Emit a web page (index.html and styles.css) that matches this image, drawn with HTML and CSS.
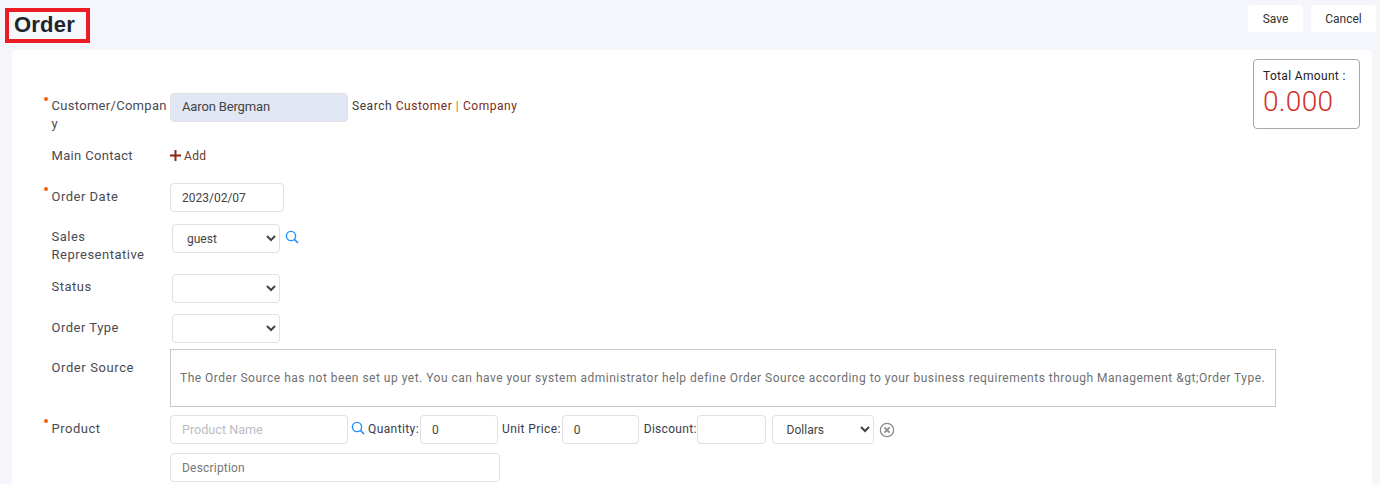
FILE: index.html
```html
<!DOCTYPE html>
<html lang="en">
<head>
<meta charset="utf-8">
<title>Order</title>
<link rel="stylesheet" href="styles.css">
</head>
<body>
<header class="top">
  <h1 class="title">Order</h1>
  <div class="actions">
    <button class="btn btn-save">Save</button>
    <button class="btn">Cancel</button>
  </div>
</header>
<main class="card">
  <div class="total">
    <div class="total-label">Total Amount :</div>
    <div class="total-value">0.000</div>
  </div>
  <div class="row row-customer">
    <label class="label req">Customer/Company</label>
    <input class="input input-customer" value="Aaron Bergman">
    <span class="search-text">Search <a class="link">Customer</a> <span class="sep">|</span> <a class="link">Company</a></span>
  </div>
  <div class="row row-contact">
    <label class="label">Main Contact</label>
    <a class="add"><svg class="plus" width="11" height="11" viewBox="0 0 11 11"><path d="M5.5 0v11M0 5.5h11" stroke="#8a2a12" stroke-width="2"/></svg>Add</a>
  </div>
  <div class="row row-date">
    <label class="label req">Order Date</label>
    <input class="input input-date" value="2023/02/07">
  </div>
  <div class="row row-sales">
    <label class="label">Sales Representative</label>
    <select class="select"><option>guest</option></select>
    <svg class="search-icon search-sales" width="14" height="14" viewBox="0 0 14 14"><circle cx="6" cy="6" r="4.6" fill="none" stroke="#1e90ff" stroke-width="1.4"/><path d="M9.4 9.4L13 13" stroke="#1e90ff" stroke-width="1.6"/></svg>
  </div>
  <div class="row row-status">
    <label class="label">Status</label>
    <select class="select"><option></option></select>
  </div>
  <div class="row row-type">
    <label class="label">Order Type</label>
    <select class="select"><option></option></select>
  </div>
  <div class="row row-source">
    <label class="label">Order Source</label>
    <div class="source-box">The Order Source has not been set up yet. You can have your system administrator help define Order Source according to your business requirements through Management &amp;gt;Order Type.</div>
  </div>
  <div class="row row-product">
    <label class="label req">Product</label>
    <div class="product">
      <div class="product-line">
        <input class="input input-product" placeholder="Product Name">
        <svg class="search-icon search-product" width="14" height="14" viewBox="0 0 14 14"><circle cx="6" cy="6" r="4.6" fill="none" stroke="#1e90ff" stroke-width="1.4"/><path d="M9.4 9.4L13 13" stroke="#1e90ff" stroke-width="1.6"/></svg>
        <span class="field-label">Quantity:</span>
        <input class="input input-qty" value="0">
        <span class="field-label field-gap">Unit Price:</span>
        <input class="input input-price" value="0">
        <span class="field-label field-discount">Discount:</span>
        <input class="input input-discount">
        <select class="select select-currency"><option>Dollars</option></select>
        <svg class="remove" width="16" height="16" viewBox="0 0 16 16"><circle cx="8" cy="8" r="6.6" fill="none" stroke="#8c8c8c" stroke-width="1.3"/><path d="M5.4 5.4l5.2 5.2M10.6 5.4l-5.2 5.2" stroke="#8c8c8c" stroke-width="1.8"/></svg>
      </div>
      <input class="input input-desc" value="Description">
    </div>
  </div>
</main>
</body>
</html>
```
FILE: styles.css
```css
* { box-sizing: border-box; }
html, body { height: 100%; }
body {
  margin: 0;
  height: 484px;
  overflow: hidden;
  background: #f5f6fb;
  font-family: Roboto, "Liberation Sans", sans-serif;
  font-size: 13px;
  color: #444;
  letter-spacing: 0.5px;
}
.top {
  display: flex;
  justify-content: space-between;
  align-items: flex-start;
  height: 50px;
  padding: 5px 4px 0 5px;
}
.title {
  margin: 3px 0 0;
  width: 85px;
  height: 35px;
  border: 4px solid #ed1c24;
  padding-left: 5px;
  font-family: "Liberation Sans", sans-serif;
  font-size: 22px;
  font-weight: 700;
  line-height: 26px;
  letter-spacing: 0.2px;
  color: #20242c;
  background: #f7f8fb;
}
.actions { display: flex; gap: 8px; }
.btn {
  height: 27px;
  padding: 0;
  width: 55px;
  border: 0;
  border-radius: 3px;
  background: #fff;
  font: inherit;
  font-size: 12px;
  letter-spacing: 0;
  color: #333;
}
.btn + .btn { width: 65px; }
.card {
  position: relative;
  margin: 0 8px 0 12px;
  height: 440px;
  padding-top: 43px;
  background: #fff;
  border-radius: 4px 4px 0 0;
}
.total {
  position: absolute;
  top: 9px;
  right: 12px;
  width: 107px;
  height: 70px;
  padding: 8px 9px;
  border: 1px solid #a8a8a8;
  border-radius: 4px;
}
.total-label { font-size: 12px; line-height: 16px; color: #222; white-space: nowrap; letter-spacing: .33px; }
.total-value {
  font-size: 28px;
  font-weight: 300;
  line-height: 36px;
  letter-spacing: 0.3px;
  color: #d0301f;
}
.row { display: flex; align-items: flex-start; }
.label {
  position: relative;
  flex: none;
  width: 158px;
  padding: 4px 0 0 39.5px;
  line-height: 18px;
  overflow-wrap: anywhere;
  color: #4a4a52;
}
.req::before {
  content: "";
  position: absolute;
  left: 32px;
  top: 4px;
  width: 4px;
  height: 4px;
  border-radius: 50%;
  background: #f0600f;
}
.input, .select {
  height: 29px;
  border: 1px solid #dfe1e6;
  border-radius: 4px;
  background: #fff;
  font: inherit;
  font-size: 12px;
  letter-spacing: 0;
  color: #444;
  padding: 0 11px;
  outline: none;
}
.input::placeholder { color: #bcbcc4; opacity: 1; font-size: 12.6px; }
.row-customer { height: 53px; }
.row-customer .label { letter-spacing: .3px; }
.input-customer { width: 178px; background: #e1e7f5; font-size: 13px; letter-spacing: -.15px; padding-bottom: 2px; }
.search-text { margin: 4px 0 0 4px; line-height: 19px; font-size: 12px; letter-spacing: .55px; color: #3a3a3a; }
.link { color: #7c2a20; }
.sep { color: #c07a20; }
.row-contact { height: 37px; }
.row-contact .label { padding-top: 1px; letter-spacing: .33px; }
.add { display: flex; align-items: center; height: 19px; font-size: 12px; color: #6a3a28; gap: 3px; letter-spacing: .3px; }
.row-date { height: 41px; }
.row-date .label { padding-top: 5px; }
.input-date { width: 114px; }
.row-sales { height: 50px; }
.row-status { height: 40px; }
.row-type { height: 35px; }
.row-type .label { padding-top: 5px; }
.row-product .label { padding-top: 5px; }
.select { margin-left: 2px; width: 108px; padding: 0 10px; }
.search-icon { flex: none; }
.search-sales { margin: 6px 0 0 5px; }
.row-source { height: 66px; }
.row-source .label { padding-top: 10px; letter-spacing: .6px; }
.source-box {
  width: 1106px;
  height: 58px;
  border: 1px solid #c8c8c8;
  padding: 0 9px;
  font-size: 12px;
  line-height: 56px;
  letter-spacing: 0.5px;
  white-space: nowrap;
  color: #707070;
}
.product { display: flex; flex-direction: column; gap: 9px; }
.product-line { display: flex; align-items: flex-start; }
.input-product { width: 178px; }
.search-product { margin: 6px 0 0 3px; }
.field-label { margin: 5px 1px 0 3px; line-height: 18px; font-size: 12px; letter-spacing: .4px; color: #3a3a4a; }
.field-gap { margin-left: 4px; }
.field-discount { margin-left: 5px; margin-right: 0; letter-spacing: .3px; }
.input-qty { width: 78px; }
.input-price { width: 77px; }
.input-discount { width: 69px; }
.select-currency { width: 102px; margin-left: 6px; }
.remove { margin: 7px 0 0 5px; }
.input-desc { width: 330px; color: #777; letter-spacing: .2px; }
```
